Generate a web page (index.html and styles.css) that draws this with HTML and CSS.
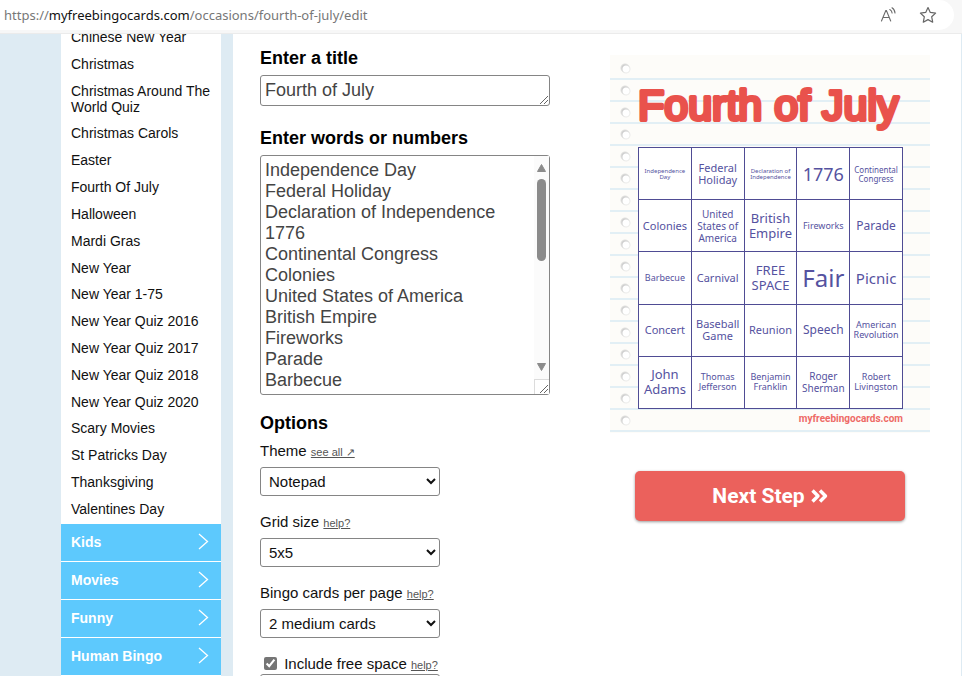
FILE: index.html
```html
<!DOCTYPE html>
<html lang="en">
<head>
  <meta charset="UTF-8">
  <title>Fourth of July Bingo Cards</title>
  <link rel="stylesheet" href="styles.css">
</head>
<body>

  <header class="browser-bar">
    <div class="address">
      <div class="url">https://<b>myfreebingocards.com</b>/occasions/fourth-of-july/edit</div>
      <button class="icon-button" aria-label="Read aloud">
        <svg width="18" height="18" viewBox="0 0 18 18" fill="none" stroke="#6b6b6b" stroke-width="1.1" stroke-linecap="round">
          <path d="M2.500 15 6.800 4.500h.6L11.700 15M4 11.500h6.200"/>
          <path d="M10.800 3.500c1.400.8 2.200 2 2.300 3.500M13 1.800c1.900 1.200 2.900 3 3 5.200"/>
        </svg>
      </button>
      <button class="icon-button" aria-label="Add to favorites">
        <svg width="18" height="18" viewBox="0 0 18 18" fill="none" stroke="#666" stroke-width="1.2" stroke-linejoin="round">
          <path d="M9 1.500l2.300 4.900 5.300.7-3.900 3.700 1 5.400L9 13.600l-4.700 2.600 1-5.400L1.400 7.100l5.300-.7z"/>
        </svg>
      </button>
    </div>
  </header>

  <div class="page">
    <nav class="sidebar">
      <ul class="sub-menu">
        <li><a href="#">Chinese New Year</a></li>
        <li><a href="#">Christmas</a></li>
        <li><a href="#">Christmas Around The World Quiz</a></li>
        <li><a href="#">Christmas Carols</a></li>
        <li><a href="#">Easter</a></li>
        <li><a href="#">Fourth Of July</a></li>
        <li><a href="#">Halloween</a></li>
        <li><a href="#">Mardi Gras</a></li>
        <li><a href="#">New Year</a></li>
        <li><a href="#">New Year 1-75</a></li>
        <li><a href="#">New Year Quiz 2016</a></li>
        <li><a href="#">New Year Quiz 2017</a></li>
        <li><a href="#">New Year Quiz 2018</a></li>
        <li><a href="#">New Year Quiz 2020</a></li>
        <li><a href="#">Scary Movies</a></li>
        <li><a href="#">St Patricks Day</a></li>
        <li><a href="#">Thanksgiving</a></li>
        <li><a href="#">Valentines Day</a></li>
      </ul>
      <ul class="menu">
        <li><a href="#">Kids <svg width="11" height="17" viewBox="0 0 11 17"><path d="M1 1l8.500 7.500L1 16"/></svg></a></li>
        <li><a href="#">Movies <svg width="11" height="17" viewBox="0 0 11 17"><path d="M1 1l8.500 7.500L1 16"/></svg></a></li>
        <li><a href="#">Funny <svg width="11" height="17" viewBox="0 0 11 17"><path d="M1 1l8.500 7.500L1 16"/></svg></a></li>
        <li><a href="#">Human Bingo <svg width="11" height="17" viewBox="0 0 11 17"><path d="M1 1l8.500 7.500L1 16"/></svg></a></li>
      </ul>
    </nav>

    <main class="content">
      <form class="editor">
        <label class="heading" for="title">Enter a title</label>
        <div class="text-box">
          <textarea id="title" class="title-input" rows="1">Fourth of July</textarea>
          <svg class="grip" width="8" height="8" viewBox="0 0 8 8"><path d="M0 8 8 0M4 8l4-4"/></svg>
        </div>

        <label class="heading" for="words">Enter words or numbers</label>
        <div class="text-box">
          <textarea id="words" class="words-input" rows="11">Independence Day
Federal Holiday
Declaration of Independence
1776
Continental Congress
Colonies
United States of America
British Empire
Fireworks
Parade
Barbecue
Carnival
Fair
Picnic
Concert
Baseball Game
Reunion
Speech
American Revolution
John Adams
Thomas Jefferson
Benjamin Franklin
Roger Sherman
Robert Livingston</textarea>
          <div class="scrollbar">
            <svg width="9" height="8" viewBox="0 0 9 8"><path d="M4.500.5 8.500 7.500h-8z" stroke-linejoin="round"/></svg>
            <div class="thumb"></div>
            <svg width="9" height="8" viewBox="0 0 9 8"><path d="M4.500 7.500.5.5h8z" stroke-linejoin="round"/></svg>
            <div class="corner"></div>
          </div>
          <svg class="grip" width="8" height="8" viewBox="0 0 8 8"><path d="M0 8 8 0M4 8l4-4"/></svg>
        </div>

        <h3 class="heading options-heading">Options</h3>

        <div class="field">
          <div class="field-label"><label for="theme">Theme</label> <a href="#">see all ↗</a></div>
          <select id="theme"><option>Notepad</option></select>
        </div>
        <div class="field">
          <div class="field-label"><label for="grid">Grid size</label> <a href="#">help?</a></div>
          <select id="grid"><option>5x5</option></select>
        </div>
        <div class="field">
          <div class="field-label"><label for="per-page">Bingo cards per page</label> <a href="#">help?</a></div>
          <select id="per-page"><option>2 medium cards</option></select>
        </div>
        <div class="check-row">
          <input type="checkbox" id="free" checked>
          <label for="free">Include free space</label> <a href="#">help?</a>
        </div>
        <input type="text" class="free-text" aria-label="Free space text">
      </form>

      <section class="preview">
        <div class="card">
          <svg class="card-title" viewBox="0 0 265 72"><text x="0" y="45">Fourth of July</text></svg>
          <table class="bingo">
            <tr>
              <td class="s6">Independence Day</td>
              <td class="s11">Federal Holiday</td>
              <td class="s6">Declaration of Independence</td>
              <td class="s18">1776</td>
              <td class="s8">Continental Congress</td>
            </tr>
            <tr>
              <td class="s11">Colonies</td>
              <td class="s10">United States of America</td>
              <td class="s13">British Empire</td>
              <td class="s9">Fireworks</td>
              <td class="s12">Parade</td>
            </tr>
            <tr>
              <td class="s9">Barbecue</td>
              <td class="s11">Carnival</td>
              <td class="s13">FREE SPACE</td>
              <td class="s24">Fair</td>
              <td class="s15">Picnic</td>
            </tr>
            <tr>
              <td class="s11">Concert</td>
              <td class="s11">Baseball Game</td>
              <td class="s11">Reunion</td>
              <td class="s12">Speech</td>
              <td class="s9">American Revolution</td>
            </tr>
            <tr>
              <td class="s13">John Adams</td>
              <td class="s9">Thomas Jefferson</td>
              <td class="s9">Benjamin Franklin</td>
              <td class="s10">Roger Sherman</td>
              <td class="s9">Robert Livingston</td>
            </tr>
          </table>
          <div class="card-site">myfreebingocards.com</div>
        </div>
        <button class="next-button">
          Next Step
          <svg width="17" height="14" viewBox="0 0 17 14" fill="none" stroke="#fff" stroke-width="3.400" stroke-linejoin="round"><path d="M1.500 1.500 7 7l-5.500 5.500M9 1.500 14.500 7 9 12.500"/></svg>
        </button>
      </section>
    </main>
  </div>

</body>
</html>
```
FILE: styles.css
```css
* {
  box-sizing: border-box;
}

body {
  margin: 0;
  height: 100vh;
  display: flex;
  flex-direction: column;
  overflow: hidden;
  font-family: "Liberation Sans", Arial, sans-serif;
  font-size: 15px;
  color: #111;
  background: #deebf3;
}

ul {
  list-style: none;
  margin: 0;
  padding: 0;
}

/* address bar */
.browser-bar {
  flex: none;
  height: 34px;
  padding-right: 8px;
  background: #f7f7f7;
  border-bottom: 1px solid #ebebeb;
}

.address {
  display: flex;
  align-items: center;
  gap: 22px;
  height: 30px;
  padding: 0 17px 0 4px;
  background: #fff;
  border-radius: 0 15px 15px 0;
}

.url {
  flex: 1;
  font-family: "Noto Sans", "Open Sans", sans-serif;
  font-size: 13px;
  color: #777;
}

.url b {
  font-weight: normal;
  color: #111;
}

.icon-button {
  display: flex;
  padding: 0;
  border: 0;
  background: none;
}

/* page */
.page {
  flex: 1;
  min-height: 0;
  display: flex;
  gap: 12px;
  padding: 0 1px 0 61px;
}

.sidebar {
  flex: none;
  width: 160px;
  display: flex;
  flex-direction: column;
  overflow: hidden;
  background: #fff;
}

.sub-menu {
  flex: 1;
  display: flex;
  flex-direction: column;
  justify-content: space-between;
  margin-top: -5px;
  padding: 0 10px 7px;
}

.sub-menu a {
  display: block;
  font-size: 14px;
  line-height: 16px;
  color: #111;
  text-decoration: none;
}

.menu a {
  display: flex;
  align-items: center;
  justify-content: space-between;
  height: 38px;
  padding: 0 12px 2px 10px;
  border-bottom: 1px solid #fff;
  background: #5dc9fd;
  color: #fff;
  font-size: 14px;
  font-weight: bold;
  text-decoration: none;
}

.menu path {
  fill: none;
  stroke: #fff;
  stroke-width: 1.3;
}

.content {
  flex: 1;
  display: flex;
  gap: 60px;
  padding-left: 27px;
  overflow: hidden;
  background: #fff;
}

/* form */
.editor {
  flex: none;
  width: 290px;
  padding-top: 12px;
}

.heading {
  display: block;
  margin: 0 0 5px;
  font-size: 18px;
  font-weight: bold;
  line-height: 24px;
  color: #000;
}

.text-box {
  position: relative;
  margin-bottom: 20px;
}

textarea {
  display: block;
  width: 100%;
  padding: 4px;
  border: 1px solid #858585;
  border-radius: 3px;
  font-family: inherit;
  font-size: 18px;
  line-height: 21px;
  color: #444;
  overflow: hidden;
  resize: none;
}

.words-input {
  height: 240px;
}

.scrollbar {
  position: absolute;
  top: 1px;
  right: 1px;
  bottom: 1px;
  width: 15px;
  display: flex;
  flex-direction: column;
  align-items: center;
  padding-top: 8px;
  background: #fbfbfb;
}

.scrollbar svg {
  fill: #8b8b8b;
  stroke: #8b8b8b;
}

.thumb {
  width: 9px;
  height: 82px;
  margin: 7px 0 auto;
  border-radius: 5px;
  background: #8b8b8b;
}

.corner {
  align-self: stretch;
  height: 15px;
  margin-top: 8px;
  border: 1px solid #dcdcdc;
  border-width: 1px 0 0 1px;
  background: #fff;
}

.grip {
  position: absolute;
  right: 2px;
  bottom: 2px;
  stroke: #666;
}

.options-heading {
  margin: -4px 0 6px;
}

.field {
  margin-bottom: 16px;
}

.field-label {
  margin-bottom: 6px;
  line-height: 20px;
}

.editor a {
  font-size: 11px;
  line-height: 12px;
  color: #555;
}

select,
.free-text {
  display: block;
  width: 180px;
  height: 29px;
  padding: 0 4px;
  border: 1px solid #858585;
  border-radius: 3px;
  background: #fff;
  color: #111;
  font-family: inherit;
  font-size: 15px;
}

.check-row {
  line-height: 20px;
}

.check-row input {
  width: 13px;
  height: 13px;
  margin: 0 3px 0 4px;
  vertical-align: -1px;
  accent-color: #757575;
}

/* card preview */
.preview {
  flex: none;
  width: 320px;
  padding-top: 21px;
}

/* ruled paper: punched holes down the left, a line every 22px */
.card {
  height: 378px;
  padding: 20px 27px 0 28px;
  background:
    radial-gradient(circle at 16px 14px, #fff 3px, transparent 4px) 0 0 / 32px 22px repeat-y,
    radial-gradient(circle at 15px 13px, #cfcfcf 3px, #e0e0de 4px, transparent 5px) 0 0 / 32px 22px repeat-y,
    radial-gradient(circle at 16px 14px, #ececea 4px, transparent 5px) 0 0 / 32px 22px repeat-y,
    linear-gradient(#fdfcf9, #fdfcf9) 0 0 / 100% 20px no-repeat,
    linear-gradient(#e2eff5 2px, transparent 2px) 0 1px / 100% 22px,
    #fdfcf9;
}

.card-title {
  display: block;
  width: 265px;
  height: 72px;
  overflow: visible;
}

.card-title text {
  font-family: "Liberation Sans", Arial, sans-serif;
  font-size: 43px;
  fill: #e9524c;
  stroke: #e9524c;
  stroke-width: 4px;
  stroke-linejoin: round;
}

.bingo {
  width: 100%;
  height: 262px;
  table-layout: fixed;
  border-collapse: collapse;
  background: #fff;
  font-family: "Noto Sans", "Open Sans", sans-serif;
  color: #5552a0;
}

.bingo td {
  height: 52px;
  padding: 0;
  border: 1px solid #4f4c94;
  text-align: center;
}

.s6 { font-size: 6px; line-height: 6px; }
.s8 { font-size: 8px; line-height: 9px; }
.s9 { font-size: 9px; line-height: 10px; }
.s10 { font-size: 10px; line-height: 12px; }
.s11 { font-size: 11px; line-height: 12px; }
.s12 { font-size: 12px; line-height: 14px; }
.s13 { font-size: 13px; line-height: 15px; }
.s15 { font-size: 15px; line-height: 18px; }
.s18 { font-size: 18px; line-height: 24px; }
.s24 { font-size: 24px; line-height: 30px; }

.card-site {
  font-family: Roboto, sans-serif;
  font-size: 10px;
  font-weight: bold;
  line-height: 20px;
  text-align: right;
  color: #ee6a66;
}

.next-button {
  display: flex;
  align-items: center;
  justify-content: center;
  gap: 6px;
  width: 270px;
  height: 50px;
  margin: 38px auto 0;
  border: 0;
  border-radius: 5px;
  background: #eb615c;
  box-shadow: 0 1px 3px rgba(0, 0, 0, 0.4);
  color: #fff;
  font-family: Roboto, sans-serif;
  font-size: 21px;
  font-weight: bold;
}
```
